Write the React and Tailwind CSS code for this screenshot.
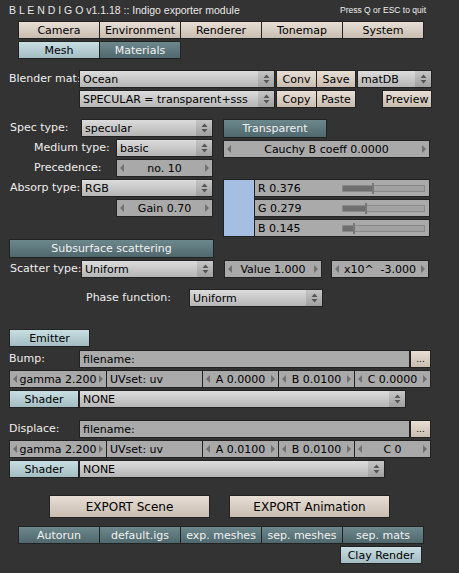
import React from "react"

// Blender 2.4x style widgets for the Blendigo exporter panel

const looks = {
  beige: "bg-linear-to-b from-[#e7ded5] to-[#c9bdb1] text-black",
  blue: "bg-linear-to-b from-[#c8dee2] to-[#a3bdc2] text-black",
  teal: "bg-linear-to-b from-[#6d888d] to-[#4f686d] text-[#f2f2f2]",
}

function Btn({ kind = "beige", className = "", children }) {
  return (
    <div className={`flex items-center justify-center border border-[#222] leading-none whitespace-nowrap ${looks[kind]} ${className}`}>
      {children}
    </div>
  )
}

function UpDown() {
  return (
    <svg width="7" height="10" viewBox="0 0 7 10">
      <path d="M0.5 4 L3.5 0.5 L6.5 4 Z" fill="#555" />
      <path d="M0.5 6 L3.5 9.5 L6.5 6 Z" fill="#555" />
    </svg>
  )
}

function Menu({ className = "", children }) {
  return (
    <div className={`h-[18px] flex items-stretch border border-[#222] bg-linear-to-b from-[#dcdcdc] to-[#b5b5b5] text-black leading-none ${className}`}>
      <span className="flex-1 flex items-center pl-[3px] whitespace-nowrap overflow-hidden">{children}</span>
      <span className="w-[16px] flex items-center justify-center bg-linear-to-b from-[#c6c6c6] to-[#a0a0a0]">
        <UpDown />
      </span>
    </div>
  )
}

function Arrow({ right }) {
  return (
    <svg width="4" height="8" viewBox="0 0 4 8" className="shrink-0">
      <path d={right ? "M0 0 L4 4 L0 8 Z" : "M4 0 L0 4 L4 8 Z"} fill="#707070" />
    </svg>
  )
}

function Num({ className = "", children }) {
  return (
    <div className={`h-[18px] flex items-center px-[3px] border border-[#222] bg-[#a9a9a9] text-black leading-none ${className}`}>
      <Arrow />
      <span className="flex-1 text-center whitespace-nowrap">{children}</span>
      <Arrow right />
    </div>
  )
}

function Field({ className = "", children }) {
  return (
    <div className={`h-[18px] flex items-center pl-[3px] border border-[#222] bg-[#aaaaaa] text-black leading-none whitespace-nowrap ${className}`}>
      {children}
    </div>
  )
}

function Slider({ label, value }) {
  return (
    <div className="h-[18px] flex items-center pl-[3px] border border-[#222] bg-[#aaaaaa] text-black leading-none">
      <span className="w-[84px]">{label}</span>
      <div className="w-[83px] h-[7px] flex border border-[#8a8a8a] bg-[#a2a2a2]">
        <div className="h-full bg-[#6f6f6f]" style={{ width: `${value * 100}%` }} />
        <div className="w-[2px] h-[11px] -mt-[3px] bg-[#e2e2e2] border-x border-[#777]" />
      </div>
    </div>
  )
}

function Label({ className = "", children }) {
  return <span className={`flex items-center text-[#eeeeee] whitespace-nowrap ${className}`}>{children}</span>
}

function MapBlock({ name, shaderWidth, a, b, c }) {
  return (
    <div className="flex flex-col gap-[2px]">
      <div className="flex h-[18px]">
        <Label className="w-[79px] pl-[9px]">{name}</Label>
        <Field className="w-[331px]">filename:</Field>
        <Btn className="w-[21px] h-[18px] text-[9px]">...</Btn>
      </div>
      <div className="flex ml-[9px]">
        <Num className="w-[98px]">gamma 2.200</Num>
        <Field className="w-[97px] -ml-px">UVset: uv</Field>
        <Num className="w-[77px] -ml-px">{a}</Num>
        <Num className="w-[77px] -ml-px">{b}</Num>
        <Num className="w-[77px] -ml-px">{c}</Num>
      </div>
      <div className="flex ml-[9px]">
        <Btn kind="blue" className="w-[70px] h-[18px]">Shader</Btn>
        <Menu className={shaderWidth}>NONE</Menu>
      </div>
    </div>
  )
}

export default function App() {
  const tabs = ["Camera", "Environment", "Renderer", "Tonemap", "System"]
  const opts = ["Autorun", "default.igs", "exp. meshes", "sep. meshes", "sep. mats"]

  return (
    <div className="min-h-screen w-full bg-[#333333] text-[11px] font-['DejaVu_Sans',sans-serif] overflow-hidden">
      {/* header */}
      <div className="h-[21px] flex items-center pl-[9px] text-[#e8e8e8] font-['Liberation_Sans',Arial,sans-serif]">
        <span className="text-[10.5px]">B L E N D I G O v1.1.18 :: Indigo exporter module</span>
        <span className="ml-auto mr-[33px] text-[8.5px] text-[#f0f0f0]">Press Q or ESC to quit</span>
      </div>

      <div className="flex ml-[18px]">
        {tabs.map((t, i) => (
          <Btn key={t} className={`h-[18px] w-[82px] ${i ? "-ml-px" : ""}`}>{t}</Btn>
        ))}
      </div>
      <div className="flex ml-[18px] mt-[2px]">
        <Btn kind="blue" className="h-[18px] w-[82px]">Mesh</Btn>
        <Btn kind="teal" className="h-[18px] w-[82px] -ml-px">Materials</Btn>
      </div>

      {/* material selection */}
      <div className="flex h-[18px] mt-[11px]">
        <Label className="w-[79px] pl-[9px]">Blender mat:</Label>
        <Menu className="w-[196px]">Ocean</Menu>
        <Btn className="w-[41px] ml-[1px]">Conv</Btn>
        <Btn className="w-[40px] -ml-px">Save</Btn>
        <Menu className="w-[75px] ml-[1px]">matDB</Menu>
      </div>
      <div className="flex h-[18px] mt-[2px]">
        <div className="w-[79px]" />
        <Menu className="w-[196px]">SPECULAR = transparent+sss</Menu>
        <Btn className="w-[41px] ml-[1px]">Copy</Btn>
        <Btn className="w-[40px] -ml-px">Paste</Btn>
        <Btn className="w-[50px] ml-[26px]">Preview</Btn>
      </div>

      {/* spec / absorption */}
      <div className="flex mt-[11px]">
        <div className="w-[213px] flex flex-col gap-[2px]">
          <div className="flex h-[18px]">
            <Label className="w-[81px] pl-[10px]">Spec type:</Label>
            <Menu className="w-[132px]">specular</Menu>
          </div>
          <div className="flex h-[18px]">
            <Label className="w-[116px] pl-[34px]">Medium type:</Label>
            <Menu className="w-[97px]">basic</Menu>
          </div>
          <div className="flex h-[18px]">
            <Label className="w-[116px] pl-[34px]">Precedence:</Label>
            <Num className="w-[97px]">no. 10</Num>
          </div>
          <div className="flex h-[18px]">
            <Label className="w-[81px] pl-[10px]">Absorp type:</Label>
            <Menu className="w-[132px]">RGB</Menu>
          </div>
          <div className="flex h-[18px]">
            <div className="w-[116px]" />
            <Num className="w-[97px]">Gain 0.70</Num>
          </div>
        </div>

        <div className="ml-[10px] flex flex-col">
          <Btn kind="teal" className="w-[104px] h-[19px]">Transparent</Btn>
          <Num className="w-[207px] mt-[2px]">Cauchy B coeff 0.0000</Num>
          <div className="flex mt-[21px]">
            <div className="w-[32px] h-[58px] border border-[#222] bg-[#a4bfe2]" />
            <div className="w-[176px] -ml-px flex flex-col gap-[2px]">
              <Slider label="R 0.376" value={0.36} />
              <Slider label="G 0.279" value={0.27} />
              <Slider label="B 0.145" value={0.12} />
            </div>
          </div>
        </div>
      </div>

      {/* subsurface scattering */}
      <Btn kind="teal" className="w-[205px] h-[19px] ml-[9px] mt-[2px]">Subsurface scattering</Btn>
      <div className="flex h-[18px] mt-[2px]">
        <Label className="w-[81px] pl-[10px]">Scatter type:</Label>
        <Menu className="w-[133px]">Uniform</Menu>
        <Num className="w-[98px] ml-[10px]">Value 1.000</Num>
        <Num className="w-[98px] ml-[9px]">x10^ &nbsp;-3.000</Num>
      </div>
      <div className="flex h-[18px] mt-[11px]">
        <Label className="w-[189px] pl-[86px]">Phase function:</Label>
        <Menu className="w-[134px]">Uniform</Menu>
      </div>

      {/* emitter, bump and displacement maps */}
      <Btn kind="blue" className="w-[81px] h-[18px] ml-[9px] mt-[22px]">Emitter</Btn>
      <div className="mt-[3px]">
        <MapBlock name="Bump:" shaderWidth="w-[327px]" a="A 0.0000" b="B 0.0100" c="C 0.0000" />
      </div>
      <div className="mt-[12px]">
        <MapBlock name="Displace:" shaderWidth="w-[306px]" a="A 0.0100" b="B 0.0100" c="C 0" />
      </div>

      {/* export */}
      <div className="flex mt-[17px]">
        <Btn className="w-[161px] h-[23px] ml-[49px] text-[12px]">EXPORT Scene</Btn>
        <Btn className="w-[161px] h-[23px] ml-[19px] text-[12px]">EXPORT Animation</Btn>
      </div>
      <div className="flex ml-[18px] mt-[8px]">
        {opts.map((o, i) => (
          <Btn key={o} kind="teal" className={`h-[18px] w-[82px] ${i ? "-ml-px" : ""}`}>{o}</Btn>
        ))}
      </div>
      <Btn kind="blue" className="w-[82px] h-[18px] ml-[340px] mt-[2px]">Clay Render</Btn>
    </div>
  )
}
